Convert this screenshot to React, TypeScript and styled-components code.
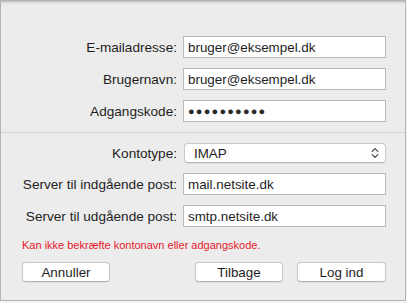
import styled, { createGlobalStyle } from "styled-components";

const GlobalStyle = createGlobalStyle`
  html, body {
    margin: 0;
    padding: 0;
    background: #f4f4f4;
    font-family: "Liberation Sans", Arial, sans-serif;
  }
  #root {
    width: 407px;
    height: 303px;
    overflow: hidden;
  }
`;

const Sheet = styled.div`
  box-sizing: border-box;
  width: 406px;
  height: 301px;
  background: linear-gradient(#a9a9a9, #e4e4e4 3px, #ececec 5px);
  border-left: 1px solid #b4b4b4;
  border-right: 1px solid #b4b4b4;
  border-bottom: 1px solid #b4b4b4;
  display: flex;
  flex-direction: column;
`;

const Section = styled.div<{ $top: number }>`
  display: grid;
  grid-template-columns: 1fr 203px;
  column-gap: 6px;
  row-gap: 10px;
  align-items: center;
  padding: ${(p) => p.$top}px 19px 10px 21px;
`;

const Label = styled.label`
  font-size: 13.6px;
  color: #1e1e1e;
  text-align: right;
  white-space: nowrap;
`;

const Field = styled.div`
  box-sizing: border-box;
  height: 22px;
  border: 1px solid #b9b9b9;
  background: #fff;
  padding: 0 4px;
  display: flex;
  align-items: center;
  font-size: 13.4px;
  color: #1e1e1e;
`;

const Dots = styled.span`
  font-size: 11px;
  letter-spacing: 1.2px;
  color: #2a2a2a;
`;

const Divider = styled.hr`
  margin: 0;
  border: none;
  border-top: 1px solid #d2d2d2;
`;

const Popup = styled.div`
  box-sizing: border-box;
  height: 20px;
  margin: 0 0 0 1px;
  border: 1px solid #c9c9c9;
  border-bottom-color: #b6b6b6;
  border-radius: 4px;
  background: #fff;
  box-shadow: 0 1px 1px rgba(0, 0, 0, 0.06);
  display: flex;
  align-items: center;
  justify-content: space-between;
  padding: 0 6px 0 9px;
  font-size: 13.4px;
  color: #1e1e1e;
`;

const ErrorText = styled.div`
  padding: 0 0 0 21px;
  margin-top: 2px;
  font-size: 11px;
  color: #e8192c;
`;

const ButtonRow = styled.div`
  display: flex;
  align-items: center;
  padding: 11px 19px 0 21px;
`;

const ButtonGroup = styled.div`
  display: flex;
  gap: 14px;
  margin-left: auto;
`;

const Button = styled.button<{ $width: number }>`
  box-sizing: border-box;
  width: ${(p) => p.$width}px;
  height: 20px;
  padding: 0;
  border: 1px solid #c6c6c6;
  border-bottom-color: #b2b2b2;
  border-radius: 4px;
  background: #fff;
  box-shadow: 0 1px 1px rgba(0, 0, 0, 0.05);
  font-family: "Liberation Sans", Arial, sans-serif;
  font-size: 13.4px;
  color: #1e1e1e;
`;

const Chevrons = () => (
  <svg width="8" height="12" viewBox="0 0 8 12" fill="none">
    <path
      d="M1.2 4.4 L4 1.6 L6.8 4.4 M1.2 7.6 L4 10.4 L6.8 7.6"
      stroke="#4a4a4a"
      strokeWidth="1.3"
      strokeLinecap="round"
      strokeLinejoin="round"
    />
  </svg>
);

const App = () => {
  return (
    <>
      <GlobalStyle />
      <Sheet>
        <Section $top={36}>
          <Label>E-mailadresse:</Label>
          <Field>bruger@eksempel.dk</Field>
          <Label>Brugernavn:</Label>
          <Field>bruger@eksempel.dk</Field>
          <Label>Adgangskode:</Label>
          <Field>
            <Dots>●●●●●●●●●●</Dots>
          </Field>
        </Section>
        <Divider />
        <Section $top={10}>
          <Label>Kontotype:</Label>
          <Popup>
            <span>IMAP</span>
            <Chevrons />
          </Popup>
          <Label>Server til indgående post:</Label>
          <Field>mail.netsite.dk</Field>
          <Label>Server til udgående post:</Label>
          <Field>smtp.netsite.dk</Field>
        </Section>
        <ErrorText>Kan ikke bekræfte kontonavn eller adgangskode.</ErrorText>
        <ButtonRow>
          <Button $width={88}>Annuller</Button>
          <ButtonGroup>
            <Button $width={88}>Tilbage</Button>
            <Button $width={89}>Log ind</Button>
          </ButtonGroup>
        </ButtonRow>
      </Sheet>
    </>
  );
};

export default App;
